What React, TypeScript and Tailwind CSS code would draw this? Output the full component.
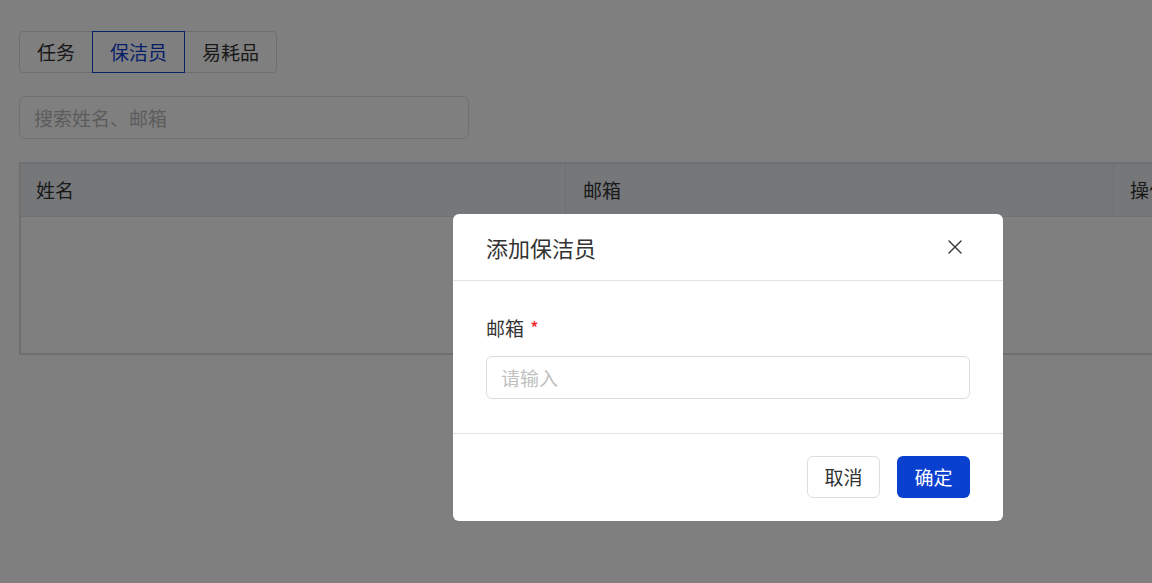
import React, { useState } from 'react';

const TABS = ['任务', '保洁员', '易耗品'];

const CloseIcon: React.FC = () => (
  <svg width="16" height="16" viewBox="0 0 16 16" fill="none" stroke="#333" strokeWidth="1.4" strokeLinecap="round">
    <path d="M2 2 L14 14 M14 2 L2 14" />
  </svg>
);

export default function App() {
  const [tab, setTab] = useState('保洁员');

  return (
    <div className="relative h-[583px] w-[1152px] overflow-hidden bg-white text-[19px] text-[#333] font-['Noto_Sans_CJK_SC','Noto_Sans',sans-serif]">
      <div className="pl-[19px] pt-[31px]">
        {/* tab switcher */}
        <div className="flex w-fit rounded border border-[#dcdde1]">
          {TABS.map((name) => (
            <button
              key={name}
              onClick={() => setTab(name)}
              className={
                name === tab
                  ? '-my-px h-[42px] border border-[#0b3fd0] px-[17px] leading-[40px] text-[#0b3fd0]'
                  : 'h-[40px] px-[17px] leading-[40px] text-[#333]'
              }
            >
              {name}
            </button>
          ))}
        </div>

        <input
          className="mt-[23px] h-[43px] w-[450px] rounded-md border border-[#dfe0e4] px-[14px] text-[19px] outline-none placeholder:text-[#b9b9b9]"
          placeholder="搜索姓名、邮箱"
        />

        {/* staff table */}
        <div className="mt-[23px] w-[1160px] border-2 border-[#dcdee3]">
          <div className="grid h-[53px] grid-cols-[544px_548px_1fr] border-b border-[#e1e3e8] bg-[#eceef2] leading-[52px]">
            <div className="pl-[15px]">姓名</div>
            <div className="border-l border-[#dcdee3] pl-[17px]">邮箱</div>
            <div className="whitespace-nowrap border-l border-[#dcdee3] pl-[16px]">操作</div>
          </div>
          <div className="h-[136px] bg-white" />
        </div>
      </div>

      {/* add staff dialog */}
      <div className="fixed inset-0 bg-black/50">
        <div className="absolute left-[453px] top-[214px] w-[550px] rounded-md bg-white">
          <div className="flex h-[67px] items-center justify-between border-b border-[#e3e3e3] pl-[33px] pr-[36px]">
            <span className="text-[22px] text-[#333]">添加保洁员</span>
            <button className="flex h-[24px] w-[24px] items-center justify-center">
              <CloseIcon />
            </button>
          </div>
          <div className="px-[33px] pb-[34px] pt-[35px]">
            <div className="flex items-center leading-[24px]">
              <span>邮箱</span>
              <span className="ml-[6px] text-[#f5222d]">*</span>
            </div>
            <input
              className="mt-[16px] h-[43px] w-full rounded-md border border-[#dcdcdc] px-[14px] text-[19px] outline-none placeholder:text-[#c0c0c0]"
              placeholder="请输入"
            />
          </div>
          <div className="flex justify-end gap-[17px] border-t border-[#e3e3e3] px-[33px] pb-[23px] pt-[22px]">
            <button className="h-[42px] w-[73px] rounded-md border border-[#dedede] bg-white text-[#333]">取消</button>
            <button className="h-[42px] w-[73px] rounded-md bg-[#0a40cf] text-white">确定</button>
          </div>
        </div>
      </div>
    </div>
  );
}
